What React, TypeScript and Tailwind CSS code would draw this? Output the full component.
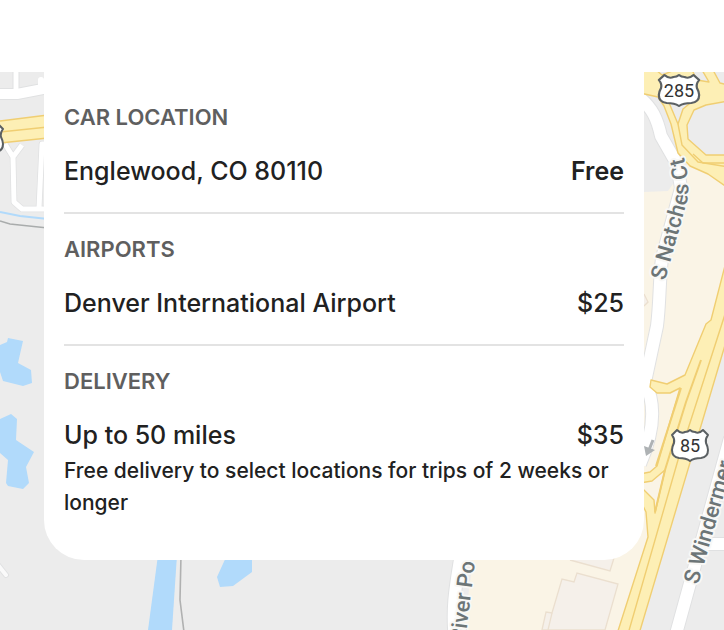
type Location = {
  heading: string;
  name: string;
  price: string;
  free?: boolean;
  note?: string;
};

const locations: Location[] = [
  { heading: "CAR LOCATION", name: "Englewood, CO 80110", price: "Free", free: true },
  { heading: "AIRPORTS", name: "Denver International Airport", price: "$25" },
  {
    heading: "DELIVERY",
    name: "Up to 50 miles",
    price: "$35",
    note: "Free delivery to select locations for trips of 2 weeks or longer",
  },
];

function Shield({ x, y, label }: { x: number; y: number; label?: string }) {
  const wide = label === "285";
  return (
    <g transform={`translate(${x} ${y})`}>
      <path
        transform={wide ? "scale(1.12 1)" : undefined}
        d="M-13 -15 Q-9 -11 -5 -13 Q-2 -13 0 -15 Q2 -13 5 -13 Q9 -11 13 -15 L18 -10 Q15 -6 16 -2 Q18 2 18 5 Q18 12 11 13 Q4 13 0 16 Q-4 13 -11 13 Q-18 12 -18 5 Q-18 2 -16 -2 Q-15 -6 -18 -10 Z"
        fill="#fff"
        stroke="#5b6063"
        strokeWidth="2"
        strokeLinejoin="round"
      />
      {label && (
        <text y="7" textAnchor="middle" fontSize="18" fill="#333">
          {label}
        </text>
      )}
    </g>
  );
}

function MapBackground() {
  return (
    <svg
      className="absolute inset-0 h-full w-full font-[Roboto,sans-serif]"
      viewBox="0 72 724 558"
      preserveAspectRatio="xMinYMin slice"
      aria-hidden="true"
    >
      <defs>
        <path id="natches" d="M665 281 L687 201 Q692 181 680 145" />
      </defs>
      <rect y="72" width="724" height="558" fill="#ececec" />

      {/* commercial area and buildings */}
      <path d="M474 550 L644 500 V192 L668 191 L690 160 L724 182 V330 L632 630 H464 Z" fill="#faf4e6" />
      <path
        d="M542 630 L546 612 L552 613 L562 579 L574 582 L577 573 L618 584 L605 630 Z"
        fill="#f5f0ea"
        stroke="#ebdfcf"
        strokeWidth="1.3"
      />
      <path d="M552 613 L548 630" stroke="#ebdfcf" strokeWidth="1.3" />
      <path d="M570 560 L610 571 L614 558" fill="#f5f0ea" stroke="#ebdfcf" strokeWidth="1.3" />
      <path d="M644 294 L648 302 L644 306" fill="#f5f0ea" stroke="#ebdfcf" strokeWidth="1.3" />

      {/* water */}
      <g fill="#b1dafb">
        <path d="M0 345 L7 342 L8 338 L23 341 L18 363 L31 370 L32 383 L23 386 L3 381 L0 372 Z" />
        <path d="M0 419 L11 414 L17 419 L16 440 L34 452 L26 467 L29 483 L23 489 L8 486 L6 483 L8 460 L0 453 Z" />
        <path d="M158 555 H177 L172 630 H148 Z" />
        <path d="M227 555 H252 V572 L233 586 L220 587 L217 577 Z" />
      </g>
      <path d="M0 212 L20 216 L48 219" fill="none" stroke="#b1dafb" strokeWidth="2" />
      <path d="M0 221 L10 224 L48 228" fill="none" stroke="#a9acac" strokeWidth="1.5" />
      <path d="M181 555 L180 600 L184 632" fill="none" stroke="#b0b1b1" strokeWidth="1.6" />

      {/* local streets */}
      <g fill="none" stroke="#e0e1e2" strokeLinejoin="round">
        <path d="M16 70 V94" strokeWidth="7" />
        <path d="M0 94 H17 L48 88" strokeWidth="12" />
        <path d="M5 144 L13 157 L14 202 L22 209 H48 M13 157 L22 145 M39 208 L42 144 H48" strokeWidth="6.5" />
        <path d="M-6 560 L6 575" strokeWidth="6" strokeLinecap="round" />
        <path
          d="M640 98 C652 108 657 118 661 136 L677 164 L681 188 L662 258 C659 285 660 302 657 326 L645 382 C655 402 655 430 640 464"
          strokeWidth="14"
        />
        <path d="M455 640 C451 605 457 580 461 553" strokeWidth="14" />
        <path d="M676 634 L730 438 M706 544 H726" strokeWidth="14" />
      </g>
      <g fill="none" stroke="#fff" strokeLinejoin="round">
        <path d="M16 70 V94" strokeWidth="5" />
        <path d="M0 94 H17 L48 88" strokeWidth="10" />
        <path d="M41 80 V90" strokeWidth="6" strokeLinecap="round" />
        <path d="M5 144 L13 157 L14 202 L22 209 H48 M13 157 L22 145 M39 208 L42 144 H48" strokeWidth="5" />
        <path d="M-6 560 L6 575" stroke="#fafafa" strokeWidth="4" strokeLinecap="round" />
        <path
          d="M640 98 C652 108 657 118 661 136 L677 164 L681 188 L662 258 C659 285 660 302 657 326 L645 382 C655 402 655 430 640 464"
          strokeWidth="12"
        />
        <path d="M455 640 C451 605 457 580 461 553" strokeWidth="12" />
        <path d="M676 634 L730 438 M706 544 H726" strokeWidth="12" />
      </g>
      <path d="M653 440 L649 450" stroke="#aeb2b4" strokeWidth="3" />
      <path d="M644 446 L646 456 L655 450 Z" fill="#aeb2b4" />

      {/* highways */}
      <path d="M0 121 L48 115 V138 L0 143 Z" fill="#fdefb5" />
      <path d="M0 121 L48 115 M0 132 L48 127 M0 143 L48 138" fill="none" stroke="#f0ce72" strokeWidth="1.6" />
      <g fill="#fdefb5" stroke="#f0ce72" strokeWidth="1.4" strokeLinejoin="round">
        <path d="M640 70 H728 V188 L708 174 L690 166 L678 153 L671 124 L664 106 L658 97 L640 93 Z" stroke="none" />
        <path d="M640 93 L658 97 L664 106 L671 124 L678 153 L690 166 L708 174 L728 188" fill="none" />
        <path d="M728 101 L706 105 L694 110 L687 125 L688 139 L706 155 H728 Z" fill="#ececec" />
        <path d="M667 98 L678 124 L683 109 L694 100 Z" fill="#ececec" />
        <path d="M692 70 H702 L709 82 L697 80 Z" fill="#ececec" />
        <path d="M713 70 H728 V85 L720 83 Z" fill="#ececec" />
        <path d="M656 70 H675 L662 75 Z" fill="#ececec" />
        <path d="M678 124 L682 145 L698 162 L728 167" fill="none" />
        <path d="M693 154 L703 163 L728 163" fill="none" />
        <path d="M728 254 L711 320 L706 324 L685 375 L667 384 L651 380 L650 387 L657 393 L670 393 L680 388 L657 466 L650 472 L640 474 V483 L652 481 L665 470 L655 513 L654 500 L640 486 V500 L646 512 L648 537 L617 634 H639 L728 335 Z" />
        <path d="M656 466 L681 388" fill="none" strokeWidth="2" />
        <path d="M701 360 L686 402 L665 470 L655 512" fill="none" strokeWidth="2" />
        <path d="M728 305 L678 460 L628 634" fill="none" />
      </g>

      <g
        fontSize="22"
        fontWeight="500"
        fill="#6c7577"
        stroke="#f8f8f6"
        strokeWidth="4"
        paintOrder="stroke"
        strokeLinejoin="round"
      >
        <text>
          <textPath href="#natches">S Natches Ct</textPath>
        </text>
        <text transform="translate(698 585) rotate(-74)">S Windermer</text>
        <text transform="translate(465 643) rotate(-83)">River Po</text>
      </g>
      <Shield x={679} y={90} label="285" />
      <Shield x={690} y={445} label="85" />
      <Shield x={-15} y={139} />
    </svg>
  );
}

function LocationSection({ location }: { location: Location }) {
  return (
    <section className="border-b-2 border-[#e3e3e3] pt-5 pb-6 last:border-b-0">
      <h2 className="text-[22px] leading-[30px] font-semibold text-[#5f5f5f]">{location.heading}</h2>
      <div className="mt-[22px] flex justify-between gap-4 text-[25px] leading-[34px] font-medium">
        <span>{location.name}</span>
        <span className={location.free ? "font-semibold" : ""}>{location.price}</span>
      </div>
      {location.note && <p className="mt-[3px] text-[21px] leading-8 font-medium">{location.note}</p>}
    </section>
  );
}

export default function App() {
  return (
    <main className="min-h-screen bg-white pt-18 font-[Inter,sans-serif] text-[#212121]">
      <div className="relative overflow-hidden pr-20 pb-[70px] pl-11">
        <MapBackground />
        <div className="relative rounded-b-[40px] bg-white px-5 pt-2.5 pb-[17px]">
          {locations.map((location) => (
            <LocationSection key={location.heading} location={location} />
          ))}
        </div>
      </div>
    </main>
  );
}
